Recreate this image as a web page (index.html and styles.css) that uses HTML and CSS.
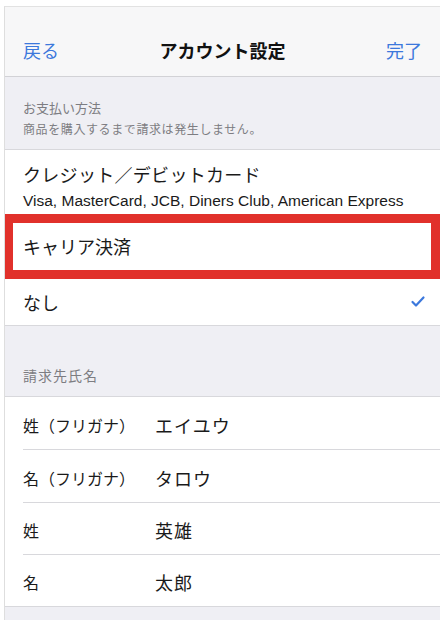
FILE: index.html
```html
<!DOCTYPE html>
<html>
	<head>
		<meta charset="utf-8">
		<link rel="stylesheet" href="styles.css">
	</head>
	<body>
		<div id="screen">
			<div class="nav">
				<span class="navButton">戻る</span>
				<span class="navTitle">アカウント設定</span>
				<span class="navButton navRight">完了</span>
			</div>

			<div class="sectionHead payHead">
				<p class="headTitle">お支払い方法</p>
				<p class="headSub">商品を購入するまで請求は発生しません。</p>
			</div>
			<div class="group">
				<div class="cell cardCell">
					<p class="cellTitle">クレジット／デビットカード</p>
					<p class="cellSub">Visa, MasterCard, JCB, Diners Club, American Express</p>
				</div>
				<div class="cell carrierCell">
					<p class="cellTitle">キャリア決済</p>
				</div>
				<div class="cell noneCell">
					<p class="cellTitle">なし</p>
					<svg class="check" width="16" height="13" viewBox="0 0 16 13">
						<polyline points="2.5,7 6,10.5 13.5,2.5" fill="none" stroke="#3c78dc" stroke-width="2.2" stroke-linecap="round" stroke-linejoin="round"/>
					</svg>
				</div>
			</div>

			<div class="sectionHead nameHead">
				<p class="headTitle nameTitle">請求先氏名</p>
			</div>
			<div class="group">
				<div class="field"><span class="fieldLabel">姓（フリガナ）</span><span class="fieldValue">エイユウ</span></div>
				<div class="field"><span class="fieldLabel">名（フリガナ）</span><span class="fieldValue">タロウ</span></div>
				<div class="field short"><span class="fieldLabel">姓</span><span class="fieldValue">英雄</span></div>
				<div class="field short"><span class="fieldLabel">名</span><span class="fieldValue">太郎</span></div>
			</div>
			<div class="sectionFoot"></div>
		</div>
	</body>
</html>
```

FILE: styles.css
```css
html, body{
	overflow:hidden;
}
body{
	margin:0px;
	padding:6px 0px 0px 4px;
	background-color:#ffffff;
	font-family:"Liberation Sans","Noto Sans CJK JP",sans-serif;
	color:#1a1a1a;
}
p{
	margin:0px;
}
#screen{
	border-left:solid 1px #dedede;
	border-top:solid 1px #e2e2e2;
	background-color:#efeff4;
	height:613px;
	overflow:hidden;
}
.nav{
	display:grid;
	grid-template-columns:1fr auto 1fr;
	align-items:center;
	height:70px;
	padding:17px 18px 0px 18px;
	box-sizing:border-box;
	background-color:#f7f7f8;
	border-bottom:solid 1px #d2d2d6;
}
.navButton{
	font-size:18px;
	color:#3c78dc;
}
.navRight{
	text-align:right;
}
.navTitle{
	font-size:18px;
	font-weight:bold;
	color:#111111;
}
.sectionHead{
	padding:0px 18px;
	box-sizing:border-box;
	color:#7d7d82;
	border-bottom:solid 1px #d8d8dc;
}
.payHead{
	padding-top:23px;
	height:73px;
}
.nameHead{
	display:flex;
	align-items:flex-end;
	height:72px;
	padding-bottom:11px;
	border-top:solid 1px #d8d8dc;
}
.headTitle{
	font-size:13px;
	line-height:18px;
}
.nameTitle{
	font-size:14px;
	letter-spacing:1px;
}
.headSub{
	font-size:12px;
	letter-spacing:0.6px;
	line-height:16px;
	margin-top:4px;
}
.group{
	background-color:#ffffff;
}
.cell{
	padding:0px 18px;
}
.cardCell{
	height:64px;
	padding-top:14px;
	box-sizing:border-box;
}
.cellTitle{
	font-size:18px;
	line-height:24px;
}
.cardCell .cellTitle{
	letter-spacing:0.3px;
}
.cellSub{
	font-size:15.5px;
	line-height:18px;
	margin-top:4px;
}
.carrierCell{
	display:flex;
	align-items:center;
	height:65px;
	margin-left:-1px;
	padding-left:10px;
	padding-top:3px;
	box-sizing:border-box;
	border:solid 9px #e1312b;
}
.noneCell{
	display:flex;
	align-items:center;
	justify-content:space-between;
	height:46px;
	padding-top:3px;
	padding-right:14px;
	box-sizing:border-box;
}
.check{
	margin-top:-4px;
}
.field{
	display:flex;
	align-items:center;
	height:53px;
	margin-left:18px;
	padding-top:3px;
	box-sizing:border-box;
	border-bottom:solid 1px #d8d8dc;
	font-size:16px;
}
.short{
	height:52px;
	padding-top:2px;
}
.field:last-child{
	border-bottom:none;
	height:51px;
}
.fieldLabel{
	width:132px;
}
.fieldValue{
	font-size:18px;
	letter-spacing:1px;
}
.sectionFoot{
	border-top:solid 1px #d8d8dc;
	height:20px;
}
```
